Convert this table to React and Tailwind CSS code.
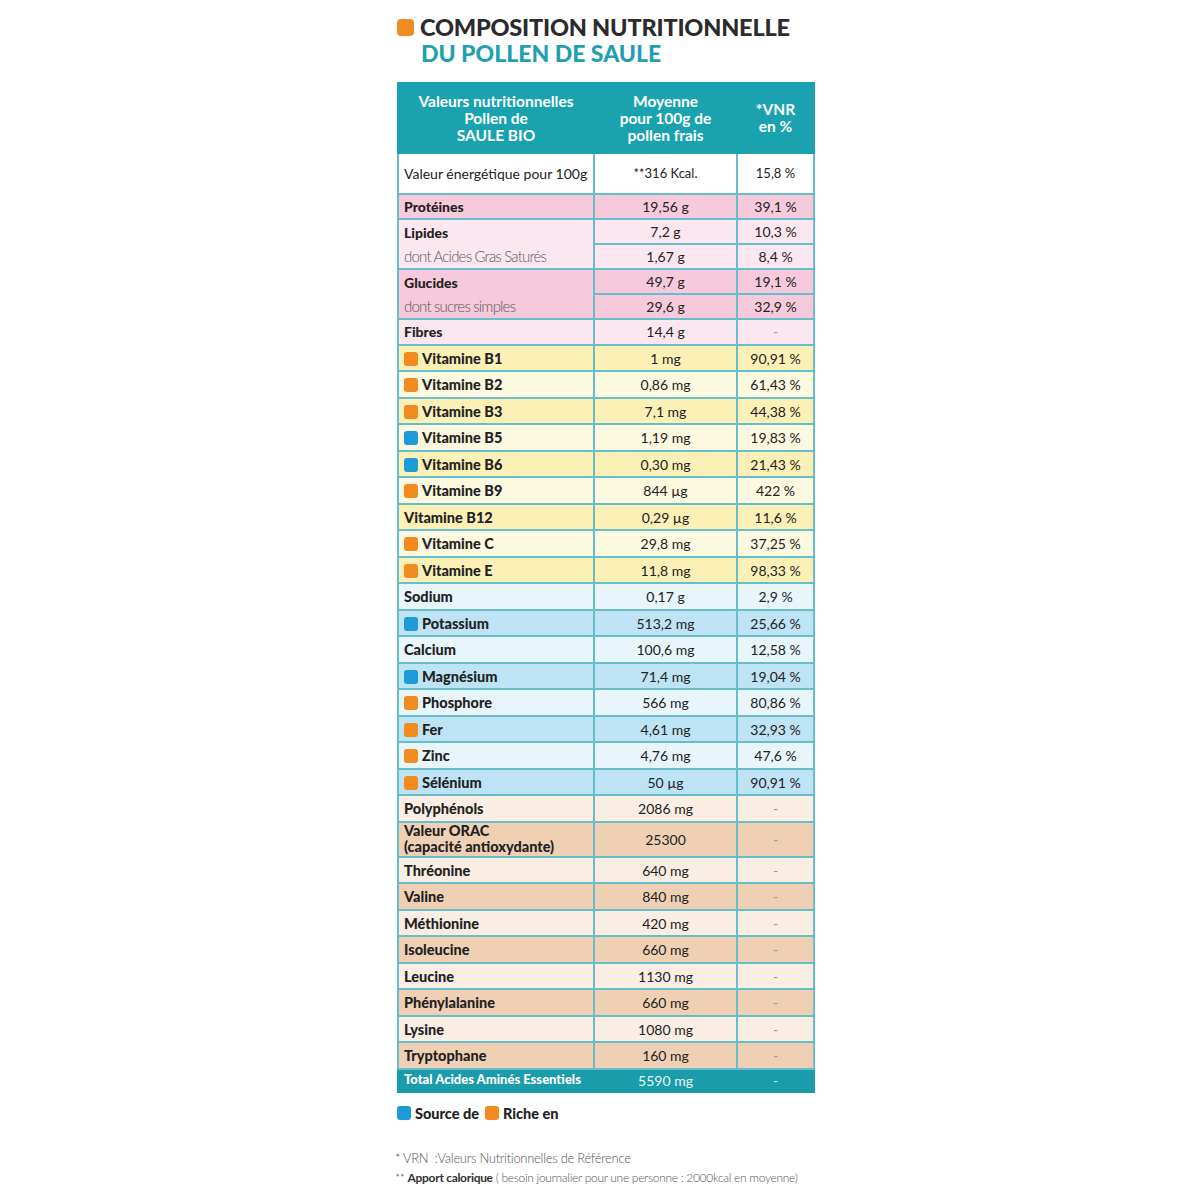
const PINK_D = 'bg-[#f6c9dc]';
const PINK_L = 'bg-[#fce7f0]';
const YEL_D = 'bg-[#fcf0b6]';
const YEL_L = 'bg-[#fdf8e0]';
const BLU_D = 'bg-[#bee3f5]';
const BLU_L = 'bg-[#e8f5fb]';
const BEI_D = 'bg-[#f0d0b4]';
const BEI_L = 'bg-[#f9ede4]';

const rows = [
    { label: 'Vitamine B1', mark: 'o', v: '1 mg', vnr: '90,91 %', bg: YEL_D },
    { label: 'Vitamine B2', mark: 'o', v: '0,86 mg', vnr: '61,43 %', bg: YEL_L },
    { label: 'Vitamine B3', mark: 'o', v: '7,1 mg', vnr: '44,38 %', bg: YEL_D },
    { label: 'Vitamine B5', mark: 'b', v: '1,19 mg', vnr: '19,83 %', bg: YEL_L },
    { label: 'Vitamine B6', mark: 'b', v: '0,30 mg', vnr: '21,43 %', bg: YEL_D },
    { label: 'Vitamine B9', mark: 'o', v: '844 µg', vnr: '422 %', bg: YEL_L },
    { label: 'Vitamine B12', v: '0,29 µg', vnr: '11,6 %', bg: YEL_D },
    { label: 'Vitamine C', mark: 'o', v: '29,8 mg', vnr: '37,25 %', bg: YEL_L },
    { label: 'Vitamine E', mark: 'o', v: '11,8 mg', vnr: '98,33 %', bg: YEL_D },
    { label: 'Sodium', v: '0,17 g', vnr: '2,9 %', bg: BLU_L },
    { label: 'Potassium', mark: 'b', v: '513,2 mg', vnr: '25,66 %', bg: BLU_D },
    { label: 'Calcium', v: '100,6 mg', vnr: '12,58 %', bg: BLU_L },
    { label: 'Magnésium', mark: 'b', v: '71,4 mg', vnr: '19,04 %', bg: BLU_D },
    { label: 'Phosphore', mark: 'o', v: '566 mg', vnr: '80,86 %', bg: BLU_L },
    { label: 'Fer', mark: 'o', v: '4,61 mg', vnr: '32,93 %', bg: BLU_D },
    { label: 'Zinc', mark: 'o', v: '4,76 mg', vnr: '47,6 %', bg: BLU_L },
    { label: 'Sélénium', mark: 'o', v: '50 µg', vnr: '90,91 %', bg: BLU_D },
    { label: 'Polyphénols', v: '2086 mg', vnr: '-', bg: BEI_L },
    { label: 'ORAC', v: '25300', vnr: '-', bg: BEI_D, tall: true },
    { label: 'Thréonine', v: '640 mg', vnr: '-', bg: BEI_L },
    { label: 'Valine', v: '840 mg', vnr: '-', bg: BEI_D },
    { label: 'Méthionine', v: '420 mg', vnr: '-', bg: BEI_L },
    { label: 'Isoleucine', v: '660 mg', vnr: '-', bg: BEI_D },
    { label: 'Leucine', v: '1130 mg', vnr: '-', bg: BEI_L },
    { label: 'Phénylalanine', v: '660 mg', vnr: '-', bg: BEI_D },
    { label: 'Lysine', v: '1080 mg', vnr: '-', bg: BEI_L },
    { label: 'Tryptophane', v: '160 mg', vnr: '-', bg: BEI_D },
];

function Mark({ kind }) {
    const c = kind === 'b' ? 'bg-[#1d9ad8]' : 'bg-[#f18a1f]';
    return <span className={`inline-block w-[14px] h-[14px] rounded-[3px] ${c} shrink-0`}></span>;
}

const cell = 'border-2 border-[#66bec8]';

export default function App() {
    return (
        <div className="w-[1200px] h-[1200px] bg-white text-[#222]" style={{ fontFamily: 'Lato, "Open Sans", sans-serif' }}>
            <div className="ml-[397px] w-[420px] pt-[14px]">
                {/* title */}
                <div className="flex items-center gap-[6px]">
                    <span className="inline-block w-[17px] h-[17px] rounded-[4px] bg-[#f18a1f]"></span>
                    <span className="text-[23.5px] font-black leading-[26px] text-[#2b2b2b] tracking-[-0.2px] whitespace-nowrap">COMPOSITION NUTRITIONNELLE</span>
                </div>
                <div className="pl-[24px] text-[23px] font-black leading-[26px] text-[#1fa0b1]">DU POLLEN DE SAULE</div>

                <table className="mt-[16px] w-[416px] table-fixed border-collapse text-[14px]">
                    <colgroup>
                        <col className="w-[196px]" />
                        <col className="w-[143px]" />
                        <col className="w-[77px]" />
                    </colgroup>
                    <thead>
                        <tr className="h-[70px] bg-[#1aa3af] text-white font-black text-[15.5px] leading-[17px]">
                            <th className="border-2 border-[#1aa3af] text-center">Valeurs nutritionnelles<br />Pollen de<br />SAULE BIO</th>
                            <th className="border-2 border-[#1aa3af] text-center">Moyenne<br />pour 100g de<br />pollen frais</th>
                            <th className="border-2 border-[#1aa3af] text-center">*VNR<br />en %</th>
                        </tr>
                    </thead>
                    <tbody>
                        <tr className="h-[41px] bg-white">
                            <td className={`${cell} pl-[5px] text-[14px] whitespace-nowrap`}>Valeur énergétique pour 100g</td>
                            <td className={`${cell} text-center text-[13px]`}>**316 Kcal.</td>
                            <td className={`${cell} text-center text-[13px]`}>15,8 %</td>
                        </tr>
                        <tr className={`h-[25px] ${PINK_D}`}>
                            <td className={`${cell} pl-[5px] font-black`}>Protéines</td>
                            <td className={`${cell} text-center`}>19,56 g</td>
                            <td className={`${cell} text-center`}>39,1 %</td>
                        </tr>
                        <tr className={`h-[25px] ${PINK_L}`}>
                            <td rowSpan={2} className={`${cell} pl-[5px] p-0 align-top`}>
                                <div className="h-[24px] flex items-center font-black">Lipides</div>
                                <div className="h-[24px] flex items-center text-[15px] text-[#5a5a5a] font-light tracking-[-0.8px] whitespace-nowrap">dont Acides Gras Saturés</div>
                            </td>
                            <td className={`${cell} text-center`}>7,2 g</td>
                            <td className={`${cell} text-center`}>10,3 %</td>
                        </tr>
                        <tr className={`h-[25px] ${PINK_L}`}>
                            <td className={`${cell} text-center`}>1,67 g</td>
                            <td className={`${cell} text-center`}>8,4 %</td>
                        </tr>
                        <tr className={`h-[25px] ${PINK_D}`}>
                            <td rowSpan={2} className={`${cell} pl-[5px] p-0 align-top`}>
                                <div className="h-[24px] flex items-center font-black">Glucides</div>
                                <div className="h-[24px] flex items-center text-[15px] text-[#5a5a5a] font-light tracking-[-0.8px] whitespace-nowrap">dont sucres simples</div>
                            </td>
                            <td className={`${cell} text-center`}>49,7 g</td>
                            <td className={`${cell} text-center`}>19,1 %</td>
                        </tr>
                        <tr className={`h-[25px] ${PINK_D}`}>
                            <td className={`${cell} text-center`}>29,6 g</td>
                            <td className={`${cell} text-center`}>32,9 %</td>
                        </tr>
                        <tr className={`h-[25.5px] ${PINK_L}`}>
                            <td className={`${cell} pl-[5px] font-black`}>Fibres</td>
                            <td className={`${cell} text-center`}>14,4 g</td>
                            <td className={`${cell} text-center text-[#999]`}>-</td>
                        </tr>
                        {rows.map((r) => (
                            <tr key={r.label} className={`${r.tall ? 'h-[35px]' : 'h-[26.5px]'} ${r.bg}`}>
                                <td className={`${cell} pl-[5px] font-black text-[14.5px] whitespace-nowrap`}>
                                    {r.tall ? (
                                        <div className="leading-[16px]">Valeur ORAC<br />(capacité antioxydante)</div>
                                    ) : (
                                        <div className="flex items-center gap-[4px] pt-[2px]">
                                            {r.mark && <Mark kind={r.mark} />}
                                            <span>{r.label}</span>
                                        </div>
                                    )}
                                </td>
                                <td className={`${cell} text-center pt-[1px]`}>{r.v}</td>
                                <td className={`${cell} text-center pt-[1px] ${r.vnr === '-' ? 'text-[#999]' : ''}`}>{r.vnr}</td>
                            </tr>
                        ))}
                        <tr className="h-[23px] bg-[#1b9caa] text-white">
                            <td className="border-2 border-[#1b9caa] pl-[5px] font-black text-[13px] whitespace-nowrap">Total Acides Aminés Essentiels</td>
                            <td className="border-2 border-[#1b9caa] text-center text-[#e6f6f8]">5590 mg</td>
                            <td className="border-2 border-[#1b9caa] text-center text-[#bfe6ea]">-</td>
                        </tr>
                    </tbody>
                </table>

                {/* legend */}
                <div className="mt-[10px] flex items-center gap-[4px] text-[14.5px] font-black">
                    <Mark kind="b" />
                    <span className="mr-[2px]">Source de</span>
                    <Mark kind="o" />
                    <span>Riche en</span>
                </div>

                <div className="mt-[24px] -ml-[2px] text-[12px] leading-[20px] text-[#555] font-light tracking-[-0.3px] whitespace-nowrap">
                    <div className="text-[13px]">* VRN&nbsp; :Valeurs Nutritionnelles de Référence</div>
                    <div>** <span className="font-bold text-[#333]">Apport calorique</span> ( besoin journalier pour une personne : 2000kcal en moyenne)</div>
                </div>
            </div>
        </div>
    );
}
